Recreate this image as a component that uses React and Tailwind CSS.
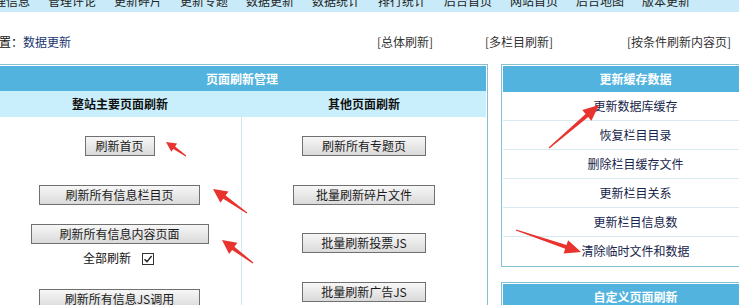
import React from "react";

const navItems = ["管理信息","管理评论","更新碎片","更新专题","数据更新","数据统计","排行统计","后台首页","网站首页","后台地图","版本更新"];

function Btn({ w, children, mt }) {
  return (
    <button className={`${w} ${mt} h-[20px] shrink-0 border border-[#707070] bg-linear-to-b from-[#f7f7f7] to-[#dadada] text-[12px] leading-[18px] text-[#1a1a1a]`}>
      {children}
    </button>
  );
}

function arrow(x1, y1, x2, y2, hl, hw, s0, s1) {
  const dx = x2 - x1, dy = y2 - y1;
  const L = Math.hypot(dx, dy);
  const ux = dx / L, uy = dy / L;
  const nx = -uy, ny = ux;
  const bx = x2 - ux * hl, by = y2 - uy * hl;
  const p = [
    [x1 + nx * s0, y1 + ny * s0],
    [bx + nx * s1, by + ny * s1],
    [bx + nx * hw, by + ny * hw],
    [x2, y2],
    [bx - nx * hw, by - ny * hw],
    [bx - nx * s1, by - ny * s1],
    [x1 - nx * s0, y1 - ny * s0],
  ];
  return p.map((q) => q[0].toFixed(1) + "," + q[1].toFixed(1)).join(" ");
}

const rows = ["更新数据库缓存","恢复栏目目录","删除栏目缓存文件","更新栏目关系","更新栏目信息数","清除临时文件和数据"];

export default function App() {
  return (
    <div className="relative w-[739px] h-[305px] overflow-hidden bg-white font-['Noto_Sans_CJK_SC','Noto_Sans',sans-serif] text-[12px] text-[#111]">
      {/* nav */}
      <div className="h-[12px] bg-[#c9ebf9] overflow-hidden">
        <div className="flex gap-[18px] ml-[-18px] mt-[-5px] leading-[12px] text-[#222]">
          {navItems.map((t) => (
            <span key={t} className="w-[48px] shrink-0 whitespace-nowrap">{t}</span>
          ))}
        </div>
      </div>

      {/* location row */}
      <div className="mt-[24px] h-[12px] flex leading-[12px] whitespace-nowrap">
        <span className="w-[414px] ml-[-37px] shrink-0">
          当前位置：<span className="text-[#1a3570]">数据更新</span>
        </span>
        <span className="w-[108px] shrink-0 text-[#333]">[总体刷新]</span>
        <span className="w-[142px] shrink-0 text-[#333]">[多栏目刷新]</span>
        <span className="shrink-0 text-[#333]">[按条件刷新内容页]</span>
      </div>

      {/* main */}
      <div className="mt-[16px] flex items-start">
        {/* left panel */}
        <div className="ml-[-4px] w-[492px] h-[260px] shrink-0 border border-[#86c1d3] p-px bg-white flex flex-col">
          <div className="h-[25px] bg-[#52b4de] text-white font-bold flex items-center justify-center leading-[12px]">
            页面刷新管理
          </div>
          <div className="h-[26px] bg-[#c9effd] flex font-bold leading-[12px]">
            <div className="w-[244px] flex items-center justify-center">整站主要页面刷新</div>
            <div className="flex-1 flex items-center justify-center">其他页面刷新</div>
          </div>
          <div className="flex flex-1">
            <div className="w-[244px] border-r border-[#cfe8f2] flex flex-col items-center">
              <Btn w="w-[70px]" mt="mt-[19px]">刷新首页</Btn>
              <Btn w="w-[161px]" mt="mt-[29px]">刷新所有信息栏目页</Btn>
              <Btn w="w-[178px]" mt="mt-[19px]">刷新所有信息内容页面</Btn>
              <div className="mt-[8px] h-[12px] flex items-center leading-[12px] ml-[-2px]">
                <span>全部刷新</span>
                <span className="ml-[11px] mt-[1px] w-[12px] h-[12px] border border-[#333] bg-white flex items-center justify-center">
                  <svg width="10" height="10" viewBox="0 0 10 10">
                    <path d="M1.5 5.2 L4 7.6 L8.6 2" fill="none" stroke="#222" strokeWidth="1.4" />
                  </svg>
                </span>
              </div>
              <Btn w="w-[161px]" mt="mt-[25px]">刷新所有信息JS调用</Btn>
            </div>
            <div className="flex-1 flex flex-col items-center">
              <Btn w="w-[124px]" mt="mt-[19px]">刷新所有专题页</Btn>
              <Btn w="w-[142px]" mt="mt-[29px]">批量刷新碎片文件</Btn>
              <Btn w="w-[124px]" mt="mt-[28px]">批量刷新投票JS</Btn>
              <Btn w="w-[124px]" mt="mt-[29px]">批量刷新广告JS</Btn>
            </div>
          </div>
        </div>

        {/* right column */}
        <div className="ml-[13px] w-[269px] shrink-0 flex flex-col">
          <div className="border border-[#86c1d3] p-px bg-white">
            <div className="h-[26px] bg-[#52b4de] text-white font-bold flex items-center justify-center leading-[12px]">
              更新缓存数据
            </div>
            {rows.map((r, i) => (
              <div
                key={r}
                className={
                  i < rows.length - 1
                    ? "h-[29px] border-b border-[#d8e9ef] flex items-center justify-center leading-[12px] text-[#16244a]"
                    : "h-[28px] flex items-center justify-center leading-[12px] text-[#16244a]"
                }
              >
                {r}
              </div>
            ))}
          </div>
          <div className="mt-[15px] border border-[#86c1d3] p-px bg-white">
            <div className="h-[26px] bg-[#52b4de] text-white font-bold flex items-center justify-center leading-[12px]">
              自定义页面刷新
            </div>
          </div>
        </div>
      </div>

      {/* red arrows overlay */}
      <svg className="absolute left-0 top-0 pointer-events-none" width="739" height="305">
        <g fill="#e8332e">
          <polygon points={arrow(186, 156, 166, 142, 10, 5, 0.5, 1.5)} />
          <polygon points={arrow(247, 213, 213, 189, 14, 7, 0.6, 2)} />
          <polygon points={arrow(253, 263, 222, 240, 14, 7, 0.6, 2)} />
          <polygon points={arrow(549, 148, 599, 105, 16, 7, 0.6, 2)} />
          <polygon points={arrow(516, 230, 581, 252, 16, 7, 0.6, 2)} />
        </g>
      </svg>
    </div>
  );
}
